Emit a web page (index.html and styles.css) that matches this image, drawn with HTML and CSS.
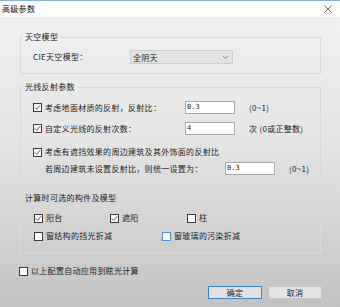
FILE: index.html
```html
<!DOCTYPE html>
<html lang="zh">
<head>
<meta charset="utf-8">
<title>高级参数</title>
<link rel="stylesheet" href="styles.css">
</head>
<body>
<div class="window">
  <div class="titlebar">
    <span class="title">高级参数</span>
    <svg class="close" width="8" height="8" viewBox="0 0 8 8"><path d="M0.5 0.5L7.5 7.5M7.5 0.5L0.5 7.5" stroke="#666" stroke-width="1" fill="none"/></svg>
  </div>
  <div class="content">
    <fieldset class="group g1">
      <legend>天空模型</legend>
      <div class="gbody">
        <div class="row field">
          <span class="lbl w-cie">CIE天空模型：</span>
          <div class="select"><span>全阴天</span><svg class="chev" width="5" height="3" viewBox="0 0 5 3"><path d="M0 0L2.5 2.5L5 0" stroke="#777" stroke-width="0.9" fill="none"/></svg></div>
        </div>
      </div>
    </fieldset>

    <fieldset class="group g2">
      <legend>光线反射参数</legend>
      <div class="gbody">
        <div class="row field">
          <span class="cb"><svg width="7" height="7" viewBox="0 0 7 7"><path d="M0.8 3.4L2.6 5.3L6.2 1.2" stroke="#555" stroke-width="1" fill="none"/></svg></span>
          <span class="lbl w-a">考虑地面材质的反射，反射比：</span>
          <span class="input">0.3</span>
          <span class="hint">(0~1)</span>
        </div>
        <div class="row field r2">
          <span class="cb"><svg width="7" height="7" viewBox="0 0 7 7"><path d="M0.8 3.4L2.6 5.3L6.2 1.2" stroke="#555" stroke-width="1" fill="none"/></svg></span>
          <span class="lbl w-a">自定义光线的反射次数：</span>
          <span class="input">4</span>
          <span class="hint">次 (0或正整数)</span>
        </div>
        <div class="row line r3">
          <span class="cb"><svg width="7" height="7" viewBox="0 0 7 7"><path d="M0.8 3.4L2.6 5.3L6.2 1.2" stroke="#555" stroke-width="1" fill="none"/></svg></span>
          <span class="lbl">考虑有遮挡效果的周边建筑及其外饰面的反射比</span>
        </div>
        <div class="row field r4">
          <span class="lbl w-b">若周边建筑未设置反射比，则统一设置为：</span>
          <span class="input">0.3</span>
          <span class="hint">(0~1)</span>
        </div>
      </div>
    </fieldset>

    <fieldset class="group g3">
      <legend>计算时可选的构件及模型</legend>
      <div class="gbody">
        <div class="row line">
          <span class="item w76"><span class="cb"><svg width="7" height="7" viewBox="0 0 7 7"><path d="M0.8 3.4L2.6 5.3L6.2 1.2" stroke="#555" stroke-width="1" fill="none"/></svg></span><span class="lbl">阳台</span></span>
          <span class="item w77"><span class="cb"><svg width="7" height="7" viewBox="0 0 7 7"><path d="M0.8 3.4L2.6 5.3L6.2 1.2" stroke="#555" stroke-width="1" fill="none"/></svg></span><span class="lbl">遮阳</span></span>
          <span class="item"><span class="cb"></span><span class="lbl">柱</span></span>
        </div>
        <div class="row line r-next">
          <span class="item w128"><span class="cb"></span><span class="lbl">窗结构的挡光折减</span></span>
          <span class="item"><span class="cb focus"></span><span class="lbl">窗玻璃的污染折减</span></span>
        </div>
      </div>
    </fieldset>

    <div class="row line auto">
      <span class="cb"></span><span class="lbl">以上配置自动应用到眩光计算</span>
    </div>

    <div class="buttons">
      <span class="btn primary">确定</span>
      <span class="btn">取消</span>
    </div>
  </div>
</div>
</body>
</html>
```

FILE: styles.css
```css
html, body {
  margin: 0;
  padding: 0;
}
body {
  width: 340px;
  height: 307px;
  overflow: hidden;
  font-family: "Noto Sans CJK SC", "Noto Sans", sans-serif;
  font-size: 8px;
  letter-spacing: 0.3px;
  color: #222;
}
.window {
  width: 340px;
  height: 307px;
  display: flex;
  flex-direction: column;
}
.titlebar {
  height: 16px;
  border-top: 1px solid #86b3d6;
  background: #ffffff;
  display: flex;
  align-items: center;
  justify-content: space-between;
  padding: 0 8px 0 2px;
}
.title {
  color: #111;
  line-height: 10px;
}
.close {
  display: block;
}
.content {
  flex: 1;
  background: linear-gradient(to bottom, #f0f0f0 0%, #e6e6e6 40%, #d2d2d2 75%, #c2c2c2 100%);
  padding: 15px 19px 0 20px;
  display: flex;
  flex-direction: column;
}
.group {
  margin: 0;
  padding: 0;
  border: 1px solid #d9d9d9;
  min-width: 0;
}
.group legend {
  margin-left: 2px;
  padding: 0 2px;
  line-height: 10px;
  color: #1a1a1a;
}
.gbody {
  padding-left: 12px;
}
.g1 .gbody {
  padding-top: 8px;
  padding-bottom: 9px;
}
.g2 {
  margin-top: 8px;
}
.g2 .gbody {
  padding-top: 9px;
  padding-bottom: 12px;
}
.g3 {
  margin-top: 5px;
}
.g3 .gbody {
  padding-top: 10px;
  padding-bottom: 11px;
  padding-left: 13px;
}
.row {
  display: flex;
  align-items: center;
}
.row.field {
  height: 13px;
}
.row.line {
  height: 10px;
  line-height: 10px;
}
.g1 .row.field {
  height: 14px;
}
.r2 {
  margin-top: 8px;
}
.r3 {
  margin-top: 12px;
}
.r4 {
  margin-top: 5px;
  padding-left: 12px;
}
.r-next {
  margin-top: 8px;
}
.lbl {
  white-space: nowrap;
  line-height: 10px;
}
.w-cie {
  width: 97px;
}
.w-a {
  width: 140px;
}
.w-b {
  width: 180px;
}
.select {
  height: 12px;
  border: 1px solid #cdcdcd;
  background: #e3e3e3;
  display: flex;
  align-items: center;
  justify-content: space-between;
  padding: 0 4px 0 2px;
  box-sizing: content-box;
  width: 95px;
}
.chev {
  display: block;
}
.cb {
  width: 7px;
  height: 7px;
  border: 1px solid #3a3a3a;
  background: #ffffff;
  margin-right: 3px;
  flex: none;
  display: flex;
  align-items: center;
  justify-content: center;
}
.cb svg {
  display: block;
}
.cb.focus {
  border-color: #4a8fd6;
}
.input {
  width: 46px;
  height: 11px;
  border: 1px solid #a9a9a9;
  background: #ffffff;
  padding: 0 1px 0 1px;
  line-height: 11px;
  font-family: "DejaVu Sans Mono", "Noto Sans CJK SC", monospace;
  font-size: 7px;
  letter-spacing: 0;
  color: #222;
  flex: none;
}
.hint {
  margin-left: 14px;
  white-space: nowrap;
  line-height: 10px;
}
.item {
  display: flex;
  align-items: center;
}
.w76 {
  width: 76px;
}
.w77 {
  width: 77px;
}
.w128 {
  width: 128px;
}
.auto {
  margin-top: 13px;
  margin-left: -1px;
}
.buttons {
  margin-top: 10px;
  margin-right: -10px;
  padding-right: 9px;
  display: flex;
  justify-content: flex-end;
  gap: 6px;
}
.btn {
  width: 52px;
  height: 11px;
  border: 1px solid #c8c8c8;
  background: #e4e4e4;
  text-align: center;
  line-height: 11px;
  color: #222;
}
.btn.primary {
  border-color: #3b83c8;
  background: #e1e1e1;
}
```
